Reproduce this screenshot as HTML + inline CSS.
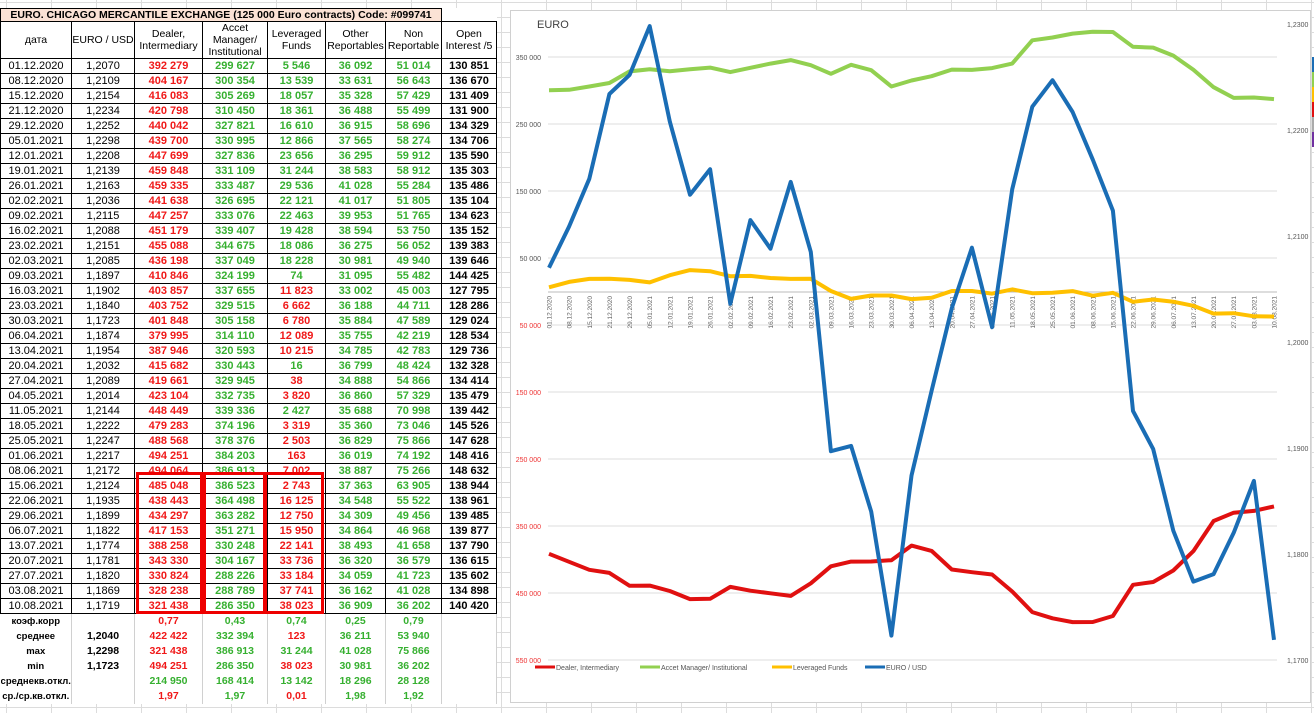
<!DOCTYPE html>
<html><head><meta charset="utf-8">
<style>
body{margin:0;width:1314px;height:713px;position:relative;overflow:hidden;background:#fff;font-family:"Liberation Sans",Arial,sans-serif;}
.grid{position:absolute;left:0;top:0;width:1314px;height:713px;
background-image:linear-gradient(to right,#dcdcdc 1px,transparent 1px),linear-gradient(to bottom,#dcdcdc 1px,transparent 1px);
background-size:45px 15px;background-position:6px 2px;}
table{position:absolute;left:0;top:8px;border-collapse:collapse;table-layout:fixed;font-size:11px;background:#fff;}
td{border:1px solid #000;height:14px;padding:0;text-align:center;white-space:nowrap;overflow:hidden;line-height:14px;}
tr.t td{height:12px;line-height:12px;font-weight:bold;font-size:10.5px;}
tr.h td{height:35px;line-height:12px;font-size:10.5px;}
.r{color:#f01818;font-weight:bold}
.g{color:#36b030;font-weight:bold}
.b{font-weight:bold}
tr.s td{border:none;border-right:1px solid #d0d0d0;font-size:10.5px;height:15px;line-height:15px;}
tr.s td.l{font-weight:bold;font-size:9.5px;}
.box{position:absolute;border:3px solid #e00;box-sizing:border-box;}
</style></head><body>
<div class="grid"></div>
<table>
<colgroup><col style="width:71px"><col style="width:63px"><col style="width:68px"><col style="width:65px"><col style="width:58px"><col style="width:60px"><col style="width:56px"><col style="width:55px"></colgroup>
<tr class="t"><td colspan="7" style="background:#fbe2d5">EURO. CHICAGO MERCANTILE EXCHANGE (125 000 Euro contracts) Code: #099741</td><td style="border-top:none;border-right:none"></td></tr>
<tr class="h"><td>дата</td><td>EURO / USD</td><td>Dealer,<br>Intermediary</td><td>Accet<br>Manager/<br>Institutional</td><td>Leveraged<br>Funds</td><td>Other<br>Reportables</td><td>Non<br>Reportable</td><td>Open<br>Interest /5</td></tr>
<tbody id="tb"></tbody>
</table>
<div class="box" style="left:136px;top:472px;width:67px;height:142px"></div>
<div class="box" style="left:203px;top:472px;width:63px;height:142px"></div>
<div class="box" style="left:264px;top:472px;width:60px;height:142px"></div>

<svg id="ch" width="1314" height="713" style="position:absolute;left:0;top:0" font-family="Liberation Sans, Arial, sans-serif">
<rect x="510.5" y="10.5" width="800" height="692" fill="#fff" stroke="#d0d0d0"/>
<text x="537" y="28" font-size="11" fill="#404040">EURO</text>
<g stroke="#dedede" stroke-width="1">
<line x1="548" x2="1277" y1="57" y2="57"/><line x1="548" x2="1277" y1="124" y2="124"/><line x1="548" x2="1277" y1="191" y2="191"/><line x1="548" x2="1277" y1="258" y2="258"/><line x1="548" x2="1277" y1="325" y2="325"/><line x1="548" x2="1277" y1="392" y2="392"/><line x1="548" x2="1277" y1="459" y2="459"/><line x1="548" x2="1277" y1="526" y2="526"/><line x1="548" x2="1277" y1="593" y2="593"/><line x1="548" x2="1277" y1="660" y2="660"/>
</g>
<line x1="548" x2="1277" y1="292" y2="292" stroke="#bbb"/>
<g font-size="7" text-anchor="end">
<text x="541" y="60" fill="#555">350 000</text><text x="541" y="127" fill="#555">250 000</text><text x="541" y="194" fill="#555">150 000</text><text x="541" y="261" fill="#555">50 000</text>
<text x="541" y="328" fill="#e33">50 000</text><text x="541" y="395" fill="#e33">150 000</text><text x="541" y="462" fill="#e33">250 000</text><text x="541" y="529" fill="#e33">350 000</text><text x="541" y="596" fill="#e33">450 000</text><text x="541" y="663" fill="#e33">550 000</text>
</g>
<g font-size="7" fill="#555">
<text x="1287" y="27">1,2300</text><text x="1287" y="133">1,2200</text><text x="1287" y="239">1,2100</text><text x="1287" y="345">1,2000</text><text x="1287" y="451">1,1900</text><text x="1287" y="557">1,1800</text><text x="1287" y="663">1,1700</text>
</g>
<g id="dates" font-size="6.5" fill="#666"></g>
<g id="lines" fill="none" stroke-width="4" stroke-linejoin="round"></g>
<g font-size="7" fill="#555">
<line x1="535" x2="555" y1="667" y2="667" stroke="#e01010" stroke-width="3"/><text x="556" y="670">Dealer, Intermediary</text>
<line x1="640" x2="660" y1="667" y2="667" stroke="#92d050" stroke-width="3"/><text x="661" y="670">Accet Manager/ Institutional</text>
<line x1="772" x2="792" y1="667" y2="667" stroke="#ffc000" stroke-width="3"/><text x="793" y="670">Leveraged Funds</text>
<line x1="865" x2="885" y1="667" y2="667" stroke="#1a6db5" stroke-width="3"/><text x="886" y="670">EURO / USD</text>
</g>
<rect x="1312" y="57" width="2" height="15" fill="#1a6db5"/><rect x="1312" y="72" width="2" height="15" fill="#92d050"/><rect x="1312" y="87" width="2" height="15" fill="#ffc000"/><rect x="1312" y="102" width="2" height="15" fill="#e01010"/><rect x="1312" y="117" width="2" height="15" fill="#aaa"/><rect x="1312" y="132" width="2" height="15" fill="#7030a0"/>
</svg>

<script>
var R=[
["01.12.2020","1,2070","392 279","299 627","5 546",1,"36 092","51 014","130 851"],
["08.12.2020","1,2109","404 167","300 354","13 539",1,"33 631","56 643","136 670"],
["15.12.2020","1,2154","416 083","305 269","18 057",1,"35 328","57 429","131 409"],
["21.12.2020","1,2234","420 798","310 450","18 361",1,"36 488","55 499","131 900"],
["29.12.2020","1,2252","440 042","327 821","16 610",1,"36 915","58 696","134 329"],
["05.01.2021","1,2298","439 700","330 995","12 866",1,"37 565","58 274","134 706"],
["12.01.2021","1,2208","447 699","327 836","23 656",1,"36 295","59 912","135 590"],
["19.01.2021","1,2139","459 848","331 109","31 244",1,"38 583","58 912","135 303"],
["26.01.2021","1,2163","459 335","333 487","29 536",1,"41 028","55 284","135 486"],
["02.02.2021","1,2036","441 638","326 695","22 121",1,"41 017","51 805","135 104"],
["09.02.2021","1,2115","447 257","333 076","22 463",1,"39 953","51 765","134 623"],
["16.02.2021","1,2088","451 179","339 407","19 428",1,"38 594","53 750","135 152"],
["23.02.2021","1,2151","455 088","344 675","18 086",1,"36 275","56 052","139 383"],
["02.03.2021","1,2085","436 198","337 049","18 228",1,"30 981","49 940","139 646"],
["09.03.2021","1,1897","410 846","324 199","74",1,"31 095","55 482","144 425"],
["16.03.2021","1,1902","403 857","337 655","11 823",-1,"33 002","45 003","127 795"],
["23.03.2021","1,1840","403 752","329 515","6 662",-1,"36 188","44 711","128 286"],
["30.03.2021","1,1723","401 848","305 158","6 780",-1,"35 884","47 589","129 024"],
["06.04.2021","1,1874","379 995","314 110","12 089",-1,"35 755","42 219","128 534"],
["13.04.2021","1,1954","387 946","320 593","10 215",-1,"34 785","42 783","129 736"],
["20.04.2021","1,2032","415 682","330 443","16",1,"36 799","48 424","132 328"],
["27.04.2021","1,2089","419 661","329 945","38",-1,"34 888","54 866","134 414"],
["04.05.2021","1,2014","423 104","332 735","3 820",-1,"36 860","57 329","135 479"],
["11.05.2021","1,2144","448 449","339 336","2 427",1,"35 688","70 998","139 442"],
["18.05.2021","1,2222","479 283","374 196","3 319",-1,"35 360","73 046","145 526"],
["25.05.2021","1,2247","488 568","378 376","2 503",-1,"36 829","75 866","147 628"],
["01.06.2021","1,2217","494 251","384 203","163",-1,"36 019","74 192","148 416"],
["08.06.2021","1,2172","494 064","386 913","7 002",-1,"38 887","75 266","148 632"],
["15.06.2021","1,2124","485 048","386 523","2 743",-1,"37 363","63 905","138 944"],
["22.06.2021","1,1935","438 443","364 498","16 125",-1,"34 548","55 522","138 961"],
["29.06.2021","1,1899","434 297","363 282","12 750",-1,"34 309","49 456","139 485"],
["06.07.2021","1,1822","417 153","351 271","15 950",-1,"34 864","46 968","139 877"],
["13.07.2021","1,1774","388 258","330 248","22 141",-1,"38 493","41 658","137 790"],
["20.07.2021","1,1781","343 330","304 167","33 736",-1,"36 320","36 579","136 615"],
["27.07.2021","1,1820","330 824","288 226","33 184",-1,"34 059","41 723","135 602"],
["03.08.2021","1,1869","328 238","288 789","37 741",-1,"36 162","41 028","134 898"],
["10.08.2021","1,1719","321 438","286 350","38 023",-1,"36 909","36 202","140 420"]];
var h="";
R.forEach(function(r){h+="<tr><td>"+r[0]+"</td><td>"+r[1]+"</td><td class='r'>"+r[2]+"</td><td class='g'>"+r[3]+"</td><td class='"+(r[5]>0?"g":"r")+"'>"+r[4]+"</td><td class='g'>"+r[6]+"</td><td class='g'>"+r[7]+"</td><td class='b'>"+r[8]+"</td></tr>";});
var S=[["коэф.корр","","r:0,77","g:0,43","g:0,74","g:0,25","g:0,79"],
["среднее","b:1,2040","r:422 422","g:332 394","r:123","g:36 211","g:53 940"],
["max","b:1,2298","r:321 438","g:386 913","g:31 244","g:41 028","g:75 866"],
["min","b:1,1723","r:494 251","g:286 350","r:38 023","g:30 981","g:36 202"],
["среднекв.откл.","","g:214 950","g:168 414","g:13 142","g:18 296","g:28 128"],
["ср./ср.кв.откл.","","r:1,97","g:1,97","r:0,01","g:1,98","g:1,92"]];
S.forEach(function(r){h+="<tr class='s'><td class='l'>"+r[0]+"</td>";for(var i=1;i<7;i++){var v=r[i];if(v){var p=v.split(":");h+="<td class='"+p[0]+"'>"+p[1]+"</td>";}else h+="<td></td>";}h+="<td></td></tr>";});
document.getElementById("tb").innerHTML=h;
function n(s){return parseFloat(s.replace(/ /g,"").replace(",","."));}
var pd="",pa="",pl="",pe="",dt="";
R.forEach(function(r,i){var x=(549+i*(1274-549)/36).toFixed(1);
pd+=x+","+(291+n(r[2])*0.00067).toFixed(1)+" ";
pa+=x+","+(291-n(r[3])*0.00067).toFixed(1)+" ";
pl+=x+","+(291-r[5]*n(r[4])*0.00067).toFixed(1)+" ";
pe+=x+","+(342-(n(r[1])-1.2)*10600).toFixed(1)+" ";
dt+="<text transform='translate("+(+x+2.5)+",296) rotate(-90)' text-anchor='end'>"+r[0]+"</text>";});
document.getElementById("dates").innerHTML=dt;
document.getElementById("lines").innerHTML="<polyline stroke='#92d050' points='"+pa+"'/><polyline stroke='#ffc000' points='"+pl+"'/><polyline stroke='#e01010' points='"+pd+"'/><polyline stroke='#1a6db5' points='"+pe+"'/>";
</script>
</body></html>
